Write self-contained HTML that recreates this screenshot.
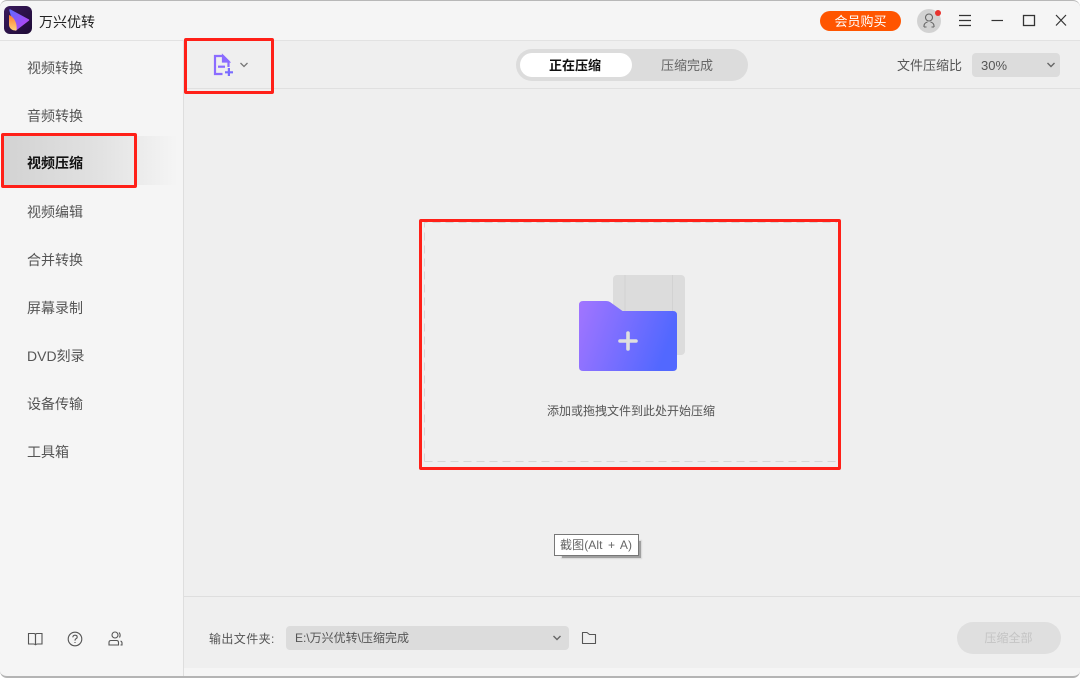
<!DOCTYPE html>
<html lang="zh-CN">
<head>
<meta charset="utf-8">
<title>万兴优转</title>
<style>
html,body{margin:0;padding:0;background:#fff;}
body{width:1080px;height:678px;overflow:hidden;position:relative;font-family:"Liberation Sans","Noto Sans CJK SC",sans-serif;color:#555;}
div,span,svg{position:absolute;box-sizing:border-box;}
.t{white-space:nowrap;font-size:13px;line-height:18px;}
.nav{left:27px;font-size:14px;line-height:18px;color:#555;white-space:nowrap;}
.red{border:3px solid #ff2018;border-radius:2px;}
</style>
</head>
<body>
<div id="win" style="left:0;top:0;width:1080px;height:678px;background:#f5f5f5;border-radius:7px;overflow:hidden;border-top:1px solid #b8b8b8;border-bottom:2px solid #b4b4b4;"></div>

<!-- title bar divider -->
<div style="left:0;top:40px;width:1080px;height:1px;background:#e2e2e2;"></div>

<!-- main area -->
<div style="left:184px;top:41px;width:896px;height:627px;background:#efefef;"></div>
<div style="left:183px;top:41px;width:1px;height:635px;background:#dedede;"></div>
<div style="left:184px;top:88px;width:896px;height:1px;background:#e0e0e0;"></div>
<div style="left:184px;top:596px;width:896px;height:1px;background:#dedede;"></div>

<!-- logo -->
<svg style="left:4px;top:6px;" width="28" height="28" viewBox="0 0 28 28">
<defs>
<linearGradient id="lb" x1="0" y1="0" x2="1" y2="1"><stop offset="0" stop-color="#3a1a5c"/><stop offset="1" stop-color="#1d0a35"/></linearGradient>
<linearGradient id="lp" x1="0" y1="0" x2="1" y2="1"><stop offset="0" stop-color="#5f6bff"/><stop offset="1" stop-color="#c13cf0"/></linearGradient>
<linearGradient id="lo" x1="0" y1="0" x2="0" y2="1"><stop offset="0" stop-color="#ff7a2c"/><stop offset="1" stop-color="#ffd27a"/></linearGradient>
</defs>
<rect width="28" height="28" rx="6" fill="url(#lb)"/>
<path d="M6 4 L24.500 14 L11.500 24 Z" fill="url(#lp)" stroke="url(#lp)" stroke-width="1.500" stroke-linejoin="round"/>
<path d="M5 9 C10 11 13.500 17 12.500 24.500 C8 25 5 22 5 18.500 Z" fill="url(#lo)"/>
</svg>
<div class="t" style="left:39px;top:13px;color:#222;font-size:14px;">万兴优转</div>

<!-- VIP -->
<div class="t" style="left:820px;top:11px;width:81px;height:20px;border-radius:10px;background:#ff5500;color:#fff;text-align:center;line-height:21px;font-size:13px;">会员购买</div>

<!-- avatar -->
<div style="left:917px;top:9px;width:24px;height:24px;border-radius:12px;background:#d2d2d2;"></div>
<svg style="left:917px;top:9px;" width="24" height="24" viewBox="0 0 24 24" fill="none" stroke="#666" stroke-width="1.100">
<circle cx="12" cy="8.500" r="3.500"/>
<path d="M7 18 v-1 q0 -3 3.500 -4 M17 18 v-1 q0 -3 -3.500 -4"/>
<path d="M7 18 h2.500 M14.500 18 h2.500"/>
</svg>
<div style="left:935px;top:10px;width:6px;height:6px;border-radius:3px;background:#e8332e;"></div>

<!-- window controls -->
<svg style="left:955px;top:10px;" width="120" height="22" viewBox="0 0 120 22" fill="none" stroke="#333" stroke-width="1.200">
<path d="M4 5.500 H16 M4 10.500 H16 M4 15.500 H16" />
<path d="M36.500 10.500 H48"/>
<rect x="68.500" y="5.500" width="11" height="10" stroke-width="1.300"/>
<path d="M101 5 L111 15.500 M111 5 L101 15.500"/>
</svg>

<!-- sidebar -->
<div style="left:1px;top:136px;width:182px;height:49px;background:linear-gradient(90deg,#d2d2d2 0%,#e2e2e2 55%,#f5f5f5 97%);"></div>
<div class="nav" style="top:59px;">视频转换</div>
<div class="nav" style="top:107px;">音频转换</div>
<div class="nav" style="top:154px;color:#111;font-weight:bold;">视频压缩</div>
<div class="nav" style="top:203px;">视频编辑</div>
<div class="nav" style="top:251px;">合并转换</div>
<div class="nav" style="top:299px;">屏幕录制</div>
<div class="nav" style="top:347px;">DVD刻录</div>
<div class="nav" style="top:395px;">设备传输</div>
<div class="nav" style="top:443px;">工具箱</div>

<!-- sidebar footer icons -->
<svg style="left:26px;top:630px;" width="100" height="18" viewBox="0 0 100 18" fill="none" stroke="#555" stroke-width="1.100">
<path d="M2.500 3.500 H8 Q9.500 3.500 9.500 5 V15 Q9 14 7.500 14 H2.500 Z"/>
<path d="M16 3.500 H11 Q9.500 3.500 9.500 5 V15 Q10 14 11.500 14 H16 Z"/>
<circle cx="49" cy="9" r="6.800"/>
<path d="M46.800 7.300 Q47 5.200 49 5.200 Q51.200 5.200 51.200 7 Q51.200 8.200 49.800 8.900 Q49 9.400 49 10.600"/>
<path d="M49 12 V13" />
<circle cx="89" cy="5" r="3"/>
<path d="M83 15 V12.500 Q83 10.500 85 10.500 H90.500 Q92.500 10.500 92.500 12.500 V15 Z"/>
<path d="M93 2.500 Q95 4.500 93.500 7.500 M94.500 11 Q96 11.500 96 13 V15 H94.500"/>
</svg>

<!-- add file icon -->
<svg style="left:212px;top:53px;" width="24" height="24" viewBox="0 0 24 24" fill="none" stroke="#8b6cff" stroke-width="2.200">
<path d="M10.500 21 H3 V3 H11 L16.500 8.500 V14"/>
<path d="M11 3 L16.500 8.500 H11 Z" fill="#8b6cff"/>
<path d="M6 13.700 H13"/>
<path d="M13 19.300 H21 M16.900 15 V23" stroke="#7a6cff"/>
</svg>
<svg style="left:239px;top:61px;" width="10" height="8" viewBox="0 0 10 8" fill="none" stroke="#777" stroke-width="1.300"><path d="M1.500 2 L5 5.500 L8.500 2"/></svg>

<!-- tabs -->
<div style="left:516px;top:49px;width:232px;height:32px;border-radius:16px;background:#dcdcdc;"></div>
<div style="left:520px;top:53px;width:112px;height:24px;border-radius:12px;background:#fff;"></div>
<div class="t" style="left:519px;top:57px;width:112px;text-align:center;color:#111;font-weight:bold;">正在压缩</div>
<div class="t" style="left:631px;top:57px;width:112px;text-align:center;color:#666;">压缩完成</div>

<!-- ratio -->
<div class="t" style="left:897px;top:57px;color:#555;">文件压缩比</div>
<div style="left:972px;top:53px;width:88px;height:24px;border-radius:4px;background:#dcdcdc;"></div>
<div class="t" style="left:981px;top:57px;color:#555;">30%</div>
<svg style="left:1046px;top:61px;" width="10" height="8" viewBox="0 0 10 8" fill="none" stroke="#666" stroke-width="1.400"><path d="M1.500 2 L5 5.500 L8.500 2"/></svg>

<!-- dashed drop zone -->
<svg style="left:419px;top:219px;" width="422" height="251" viewBox="0 0 422 251" fill="none">
<path d="M5.500 242.500 V3.500 H418 M5.500 242.500 H418" stroke="#d6d6d6" stroke-width="1" stroke-dasharray="8 5"/>
</svg>

<!-- folder illustration -->
<svg style="left:579px;top:275px;" width="106" height="96" viewBox="0 0 106 96">
<defs><linearGradient id="fg" x1="0" y1="0" x2="1" y2="0.250"><stop offset="0" stop-color="#a275ff"/><stop offset="1" stop-color="#5268ff"/></linearGradient></defs>
<rect x="34" y="0" width="72" height="80" rx="4" fill="#dcdcdc"/>
<path d="M46 0 V40 M93.500 0 V80" stroke="#d2d2d2" stroke-width="1"/>
<path d="M4 26 H27 Q29.500 26 31 27 L43.500 36 H94 Q98 36 98 40 V92 Q98 96 94 96 H4 Q0 96 0 92 V30 Q0 26 4 26 Z" fill="url(#fg)"/>
<path d="M41 66 H57 M49 58 V74" stroke="#dfdfdf" stroke-width="3.600" stroke-linecap="round"/>
</svg>
<div class="t" style="left:547px;top:402px;font-size:12px;color:#555;width:170px;">添加或拖拽文件到此处开始压缩</div>

<!-- red annotation boxes -->
<div class="red" style="left:184px;top:38px;width:90px;height:56px;"></div>
<div class="red" style="left:1px;top:133px;width:136px;height:55px;"></div>
<div class="red" style="left:419px;top:219px;width:422px;height:251px;"></div>

<!-- tooltip -->
<div style="left:562px;top:541px;width:79px;height:17px;background:#a0a0a0;box-shadow:0 0 1px 1px #d8d8d8;"></div>
<div class="t" style="left:554px;top:534px;width:85px;height:22px;background:#fff;border:1px solid #777;font-size:12px;line-height:20px;padding-left:5px;color:#666;word-spacing:2px;letter-spacing:.1px;">截图(Alt + A)</div>

<!-- output bar -->
<div class="t" style="left:209px;top:630px;font-size:12px;color:#555;letter-spacing:.4px;">输出文件夹:</div>
<div style="left:286px;top:626px;width:283px;height:24px;border-radius:4px;background:#dcdcdc;"></div>
<div class="t" style="left:295px;top:629px;font-size:12px;color:#555;">E:\万兴优转\压缩完成</div>
<svg style="left:552px;top:634px;" width="10" height="8" viewBox="0 0 10 8" fill="none" stroke="#666" stroke-width="1.400"><path d="M1.500 2 L5 5.500 L8.500 2"/></svg>
<svg style="left:581px;top:631px;" width="16" height="14" viewBox="0 0 16 14" fill="none" stroke="#555" stroke-width="1.100"><path d="M1.500 1.500 H6 L8.500 3.500 H14.500 V12.500 H1.500 Z" stroke-linejoin="round"/></svg>

<!-- compress all -->
<div class="t" style="left:957px;top:622px;width:104px;height:32px;border-radius:16px;background:#dfdfdf;color:#c4c4c4;text-align:center;line-height:32px;font-size:12px;text-indent:-1px;">压缩全部</div>
</body>
</html>
